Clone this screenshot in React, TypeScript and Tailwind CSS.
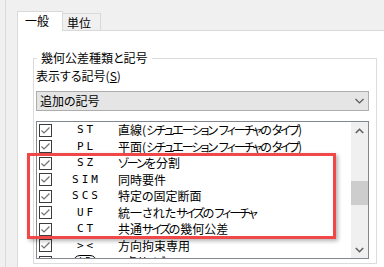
import React from "react";

const rows: { code: string; desc: string; circled?: boolean }[] = [
  { code: "ST", desc: "直線(シチュエーション フィーチャのタイプ)" },
  { code: "PL", desc: "平面(シチュエーション フィーチャのタイプ)" },
  { code: "SZ", desc: "ゾーンを分割" },
  { code: "SIM", desc: "同時要件" },
  { code: "SCS", desc: "特定の固定断面" },
  { code: "UF", desc: "統一されたサイズのフィーチャ" },
  { code: "CT", desc: "共通サイズの幾何公差" },
  { code: "><", desc: "方向拘束専用" },
  { code: "LP", desc: "2点サイズ", circled: true },
];

function Desc({ text }: { text: string }) {
  const parts = text.split(/([\u30A0-\u30FF]+)/);
  return (
    <div className="whitespace-nowrap">
      {parts.map((p, i) =>
        /^[\u30A0-\u30FF]+$/.test(p) ? (
          <span key={i} className="tracking-[-2px]">
            {p}
          </span>
        ) : (
          <span key={i}>{p}</span>
        )
      )}
    </div>
  );
}

function Check() {
  return (
    <div className="w-[13px] h-[13px] shrink-0 border border-[#3c3c3c] bg-white flex items-center justify-center">
      <svg width="11" height="11" viewBox="0 0 11 11">
        <path d="M1.5 5.5 L4 8 L9.5 2.5" fill="none" stroke="#707070" strokeWidth="1.2" />
      </svg>
    </div>
  );
}

export default function App() {
  const jp = "font-['Noto_Sans_CJK_JP','Noto_Sans',sans-serif] [font-feature-settings:'palt']";
  return (
    <div className={`relative w-[384px] h-[267px] overflow-hidden bg-[#f0f0f0] flex text-[12px] leading-[16px] text-black ${jp}`}>
      <div className="w-[5px] shrink-0" />
      <div className="w-px shrink-0 bg-[#dadada]" />
      <div className="w-[11px] shrink-0" />
      <div className="flex-1 flex flex-col pt-[11px] min-w-0">
        <div className="flex items-end h-[19px]">
          <div className="relative z-10 h-[20px] -mb-px w-[46px] bg-white border-l border-t border-r border-[#d9d9d9] pl-[7px] pt-[1px]">
            一般
          </div>
          <div className="h-[17px] w-[38px] border-t border-r border-[#d9d9d9] pl-[4px] pt-px">
            単位
          </div>
        </div>
        <div className="flex-1 bg-white border-l border-t border-[#d9d9d9] pl-[15px]">
          <fieldset className="mt-[19px] w-[344px] border border-[#dcdcdc] pb-[4px]">
            <legend className="ml-[3px] px-[4px] leading-[16px]">幾何公差種類と記号</legend>
            <div className="pl-[2px] mt-[2px] leading-[16px]">
              表示する記号(<span className="underline">S</span>)
            </div>
            <div className="ml-[2px] mt-[7px] w-[333px] h-[20px] border border-[#adadad] bg-[#e5e5e5] flex items-center justify-between pl-[3px] pr-[4px]">
              <span>追加の記号</span>
              <svg width="9" height="6" viewBox="0 0 9 6">
                <path d="M0.5 1 L4.5 5 L8.5 1" fill="none" stroke="#5a5a5a" strokeWidth="1.2" />
              </svg>
            </div>
            <div className="ml-[2px] mt-[10px] w-[333px] h-[138px] border border-[#828790] bg-white flex overflow-hidden">
              <div className="flex-1 flex flex-col overflow-hidden">
                {rows.map((r) => (
                  <div key={r.code} className="h-[16.5px] shrink-0 flex items-center pl-[2px]">
                    <Check />
                    <div className="w-[66px] shrink-0 flex justify-center">
                      {r.circled ? (
                        <span className="font-['DejaVu_Sans_Mono',monospace] text-[10px] leading-[12px] border border-black rounded-full px-[5px]">
                          LP
                        </span>
                      ) : (
                        <span className="font-['DejaVu_Sans_Mono',monospace] text-[11px] tracking-[3px] pl-[3px]">
                          {r.code}
                        </span>
                      )}
                    </div>
                    <Desc text={r.desc} />
                  </div>
                ))}
              </div>
              <div className="w-[17px] shrink-0 bg-[#f0f0f0] flex flex-col">
                <div className="h-[17px] flex items-center justify-center">
                  <svg width="9" height="6" viewBox="0 0 9 6">
                    <path d="M0.8 5 L4.5 1.3 L8.2 5" fill="none" stroke="#606060" strokeWidth="1.6" />
                  </svg>
                </div>
                <div className="flex-1 pt-[42px]">
                  <div className="h-[24px] bg-[#cdcdcd]" />
                </div>
                <div className="h-[17px] flex items-center justify-center">
                  <svg width="9" height="6" viewBox="0 0 9 6">
                    <path d="M0.8 1 L4.5 4.7 L8.2 1" fill="none" stroke="#606060" strokeWidth="1.6" />
                  </svg>
                </div>
              </div>
            </div>
          </fieldset>
        </div>
      </div>
      <div className="absolute left-[27px] top-[153px] w-[309px] h-[86px] border-[3px] border-[#f04848] shadow-[2px_2px_4px_rgba(0,0,0,0.3)]" />
    </div>
  );
}
